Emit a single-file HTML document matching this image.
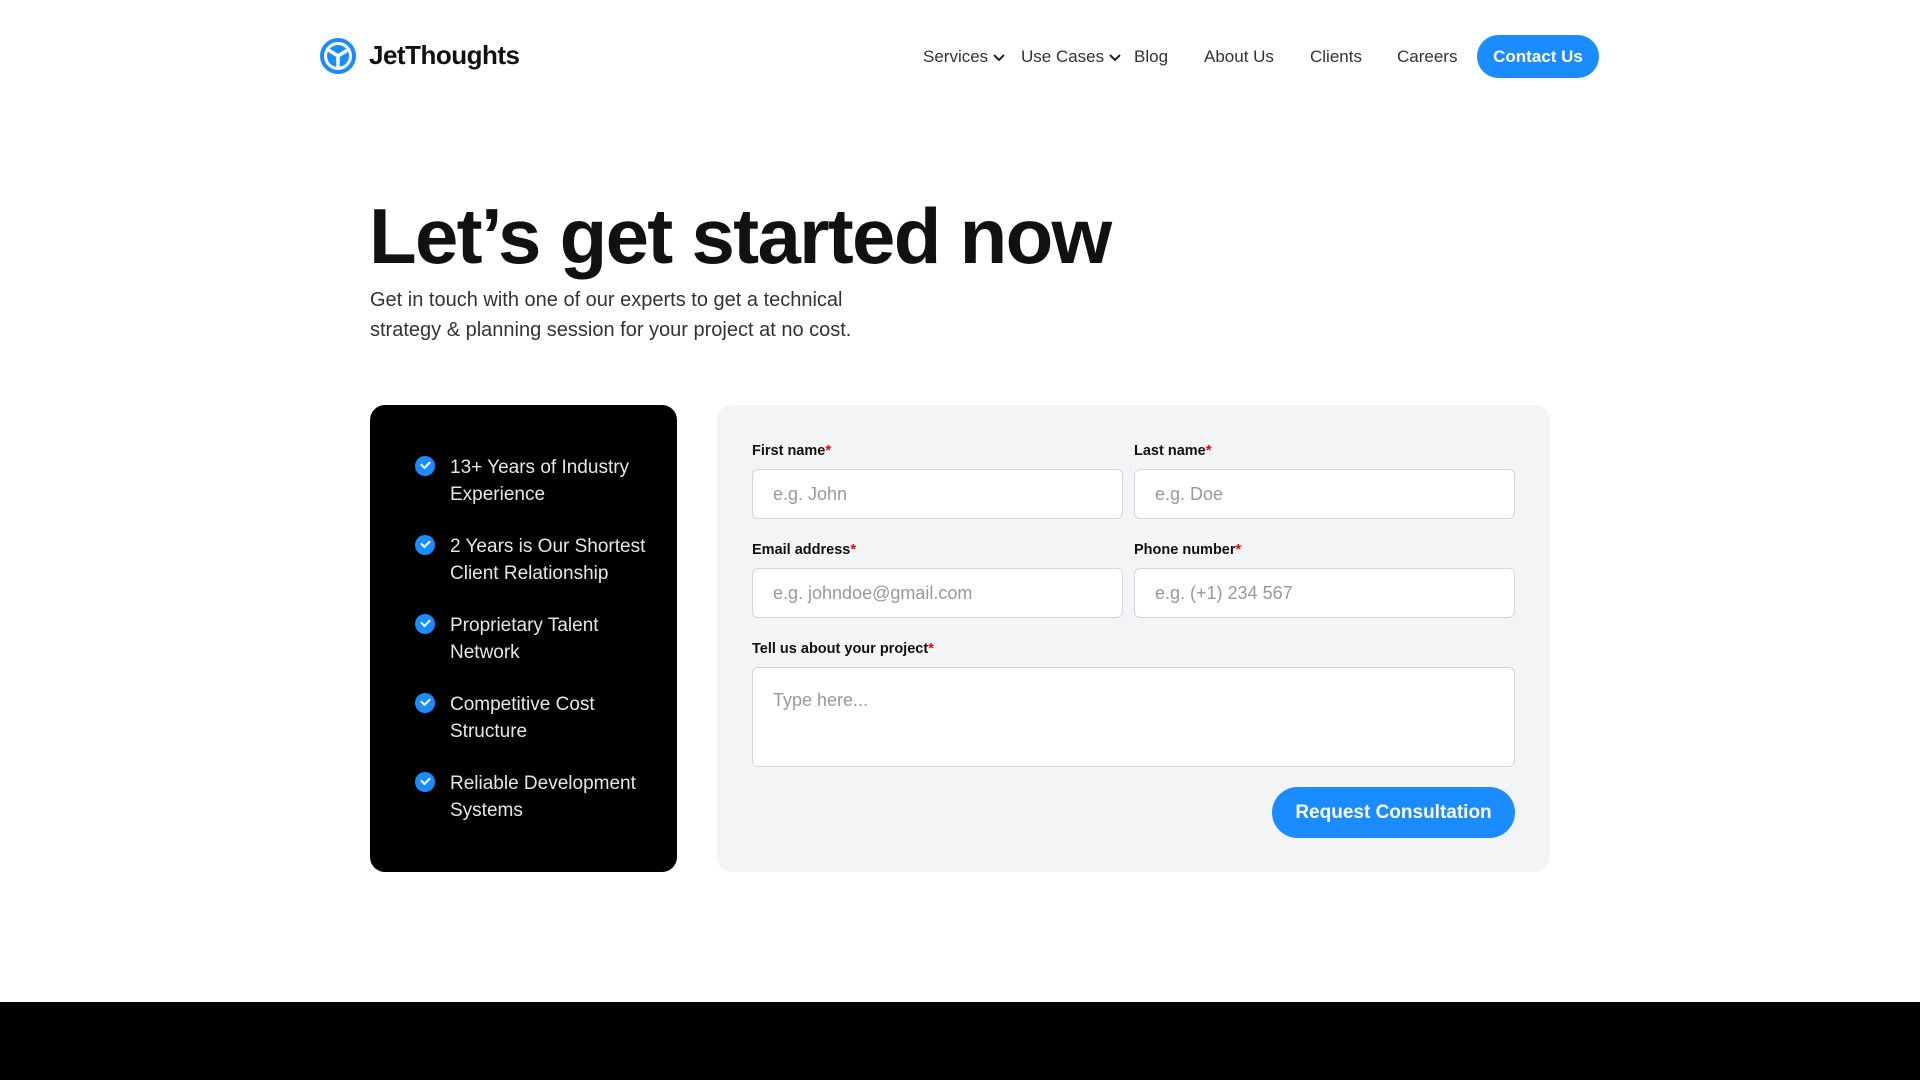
<!DOCTYPE html>
<html><head><meta charset="utf-8"><style>
*{box-sizing:border-box;margin:0;padding:0}
body{width:1920px;height:1080px;position:relative;background:#fff;font-family:"Liberation Sans",sans-serif;color:#111;overflow:hidden}
.abs{position:absolute}
.nav{font-size:17px;color:#333;top:47px}
.nav svg{vertical-align:middle;margin-left:4px}
.btn{background:#1a8cff;color:#fff;font-weight:bold;border-radius:30px;display:flex;align-items:center;justify-content:center}
h1{position:absolute;left:369px;top:191px;font-size:78px;font-weight:bold;letter-spacing:-1.7px;color:#111;line-height:90px}
.sub{left:370px;top:285px;font-size:20px;line-height:30px;color:#333}
.card{left:370px;top:405px;width:307px;height:467px;background:#000;border-radius:15px}
.item{position:absolute;left:80px;color:#e6e6e6;font-size:19px;line-height:27px;width:200px}
.item .ck{position:absolute;left:-35px;top:2px;width:20px;height:20px;border-radius:50%;background:#1a8cff}
.form{left:717px;top:405px;width:833px;height:467px;background:#f3f4f6;border-radius:15px}
.lab{position:absolute;font-size:14.5px;font-weight:bold;color:#111}
.lab b{color:#e00}
.inp{position:absolute;background:#fff;border:1px solid #d4d6da;border-radius:6px;color:#999;font-size:18px;padding-left:20px;display:flex;align-items:center}
.ck::after{content:"";position:absolute;left:6px;top:5px;width:7px;height:4px;border-left:2px solid #fff;border-bottom:2px solid #fff;transform:rotate(-45deg)}
</style></head><body>
<svg class="abs" style="left:320px;top:38px" width="36" height="36" viewBox="0 0 36 36"><circle cx="18" cy="18" r="16" fill="none" stroke="#1a8cff" stroke-width="4"/><circle cx="18" cy="18" r="11" fill="#1a8cff"/><path d="M18 18 L10 13 M18 18 L26 13 M18 18 L18 28" stroke="#fff" stroke-width="3.5" stroke-linecap="round"/></svg>
<div class="abs" style="left:369px;top:40px;font-size:26px;font-weight:bold;letter-spacing:-0.5px">JetThoughts</div>
<div class="abs nav" style="left:923px">Services<svg width="14" height="10" viewBox="0 0 14 10"><path d="M2 2l5 5 5-5" fill="none" stroke="#222" stroke-width="2"/></svg></div>
<div class="abs nav" style="left:1021px">Use Cases<svg width="14" height="10" viewBox="0 0 14 10"><path d="M2 2l5 5 5-5" fill="none" stroke="#222" stroke-width="2"/></svg></div>
<div class="abs nav" style="left:1134px">Blog</div>
<div class="abs nav" style="left:1204px">About Us</div>
<div class="abs nav" style="left:1310px">Clients</div>
<div class="abs nav" style="left:1397px">Careers</div>
<div class="abs btn" style="left:1477px;top:35px;width:122px;height:43px;font-size:17px">Contact Us</div>
<h1>Let’s get started now</h1>
<div class="abs sub">Get in touch with one of our experts to get a technical<br>strategy &amp; planning session for your project at no cost.</div>
<div class="abs card">
<div class="item" style="top:49px"><span class="ck"></span>13+ Years of Industry Experience</div>
<div class="item" style="top:128px"><span class="ck"></span>2 Years is Our Shortest Client Relationship</div>
<div class="item" style="top:207px"><span class="ck"></span>Proprietary Talent Network</div>
<div class="item" style="top:286px"><span class="ck"></span>Competitive Cost Structure</div>
<div class="item" style="top:365px"><span class="ck"></span>Reliable Development Systems</div>
</div>
<div class="abs form"></div>
<div class="lab" style="left:752px;top:443px">First name<b>*</b></div>
<div class="lab" style="left:1134px;top:443px">Last name<b>*</b></div>
<div class="inp" style="left:752px;top:469px;width:371px;height:50px">e.g. John</div>
<div class="inp" style="left:1134px;top:469px;width:381px;height:50px">e.g. Doe</div>
<div class="lab" style="left:752px;top:542px">Email address<b>*</b></div>
<div class="lab" style="left:1134px;top:542px">Phone number<b>*</b></div>
<div class="inp" style="left:752px;top:568px;width:371px;height:50px">e.g. johndoe@gmail.com</div>
<div class="inp" style="left:1134px;top:568px;width:381px;height:50px">e.g. (+1) 234 567</div>
<div class="lab" style="left:752px;top:641px">Tell us about your project<b>*</b></div>
<div class="inp" style="left:752px;top:667px;width:763px;height:100px;align-items:flex-start;padding-top:22px">Type here...</div>
<div class="abs btn" style="left:1272px;top:787px;width:243px;height:51px;font-size:19px">Request Consultation</div>
<div class="abs" style="left:0;top:1002px;width:1920px;height:78px;background:#000"></div>
</body></html>
